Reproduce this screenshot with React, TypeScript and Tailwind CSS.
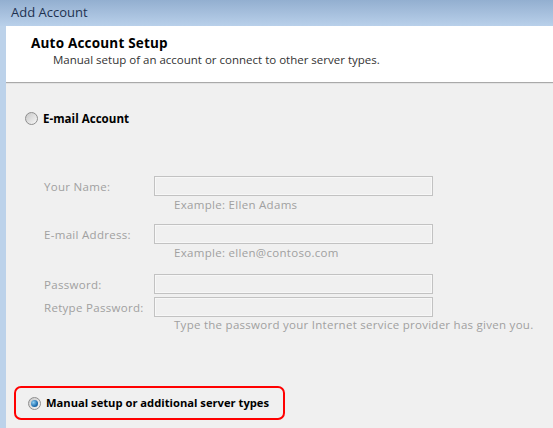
import { ReactNode } from 'react';

const font = { fontFamily: '"Open Sans", "Noto Sans", sans-serif' };

function Radio({ checked }: { checked?: boolean }) {
    return (
        <span className="relative inline-flex h-[13px] w-[13px] shrink-0 items-center justify-center rounded-full border border-[#8e8e8e] bg-gradient-to-br from-[#c9c9c9] to-[#f7f7f7]">
            {checked && (
                <span className="h-[7px] w-[7px] rounded-full bg-[radial-gradient(circle_at_35%_35%,#8fd0f4,#1f6fb0_60%,#0e4a82)]" />
            )}
        </span>
    );
}

function Field({ label, hint, top }: { label: string; hint?: ReactNode; top: string }) {
    return (
        <div className={top}>
            <div className="flex items-center">
                <span className="w-[110px] text-[11.5px] tracking-[0.3px] text-[#a0a0a0]">{label}</span>
                <div className="h-[20px] w-[279px] border border-[#c2c2c2] bg-[#f0f0f0] shadow-[inset_0_0_0_1px_#f7f7f7]" />
            </div>
            {hint && (
                <div className="mt-[1px] pl-[130px] text-[11.5px] leading-[15px] tracking-[0.3px] text-[#a0a0a0]">{hint}</div>
            )}
        </div>
    );
}

export default function App() {
    return (
        <div className="flex h-[428px] w-[553px] flex-col overflow-hidden bg-[#f0f0f0]" style={font}>
            <div className="flex h-[26px] items-center bg-gradient-to-b from-[#93afd0] to-[#b9d0ea] pl-[11px] text-[13px] text-[#1e3250]">
                Add Account
            </div>
            <div className="flex flex-1 border-l-[6px] border-[#bcd2ea]">
                <div className="flex flex-1 flex-col">
                    <div className="h-[57px] border-b border-[#a9a9a9] bg-white pl-[25px] pt-[8px] shadow-[0_1px_0_#e3e3e3]">
                        <div className="text-[13.5px] font-bold leading-[18px] tracking-[0.2px] text-black">Auto Account Setup</div>
                        <div className="pl-[22px] text-[11.5px] leading-[15px] text-[#333]">
                            Manual setup of an account or connect to other server types.
                        </div>
                    </div>

                    <div className="flex flex-1 flex-col">
                        <label className="mt-[27px] flex items-center gap-[5px] pl-[19px] text-[11.6px] font-bold text-black">
                            <Radio />
                            E-mail Account
                        </label>

                        <div className="pl-[38px]">
                            <Field top="mt-[49px]" label="Your Name:" hint="Example: Ellen Adams" />
                            <Field top="mt-[12px]" label="E-mail Address:" hint="Example: ellen@contoso.com" />
                            <Field top="mt-[14px]" label="Password:" />
                            <Field top="mt-[3px]" label="Retype Password:" />
                            <div className="pl-[130px] text-[11.5px] leading-[15px] tracking-[0.27px] text-[#a0a0a0]">
                                Type the password your Internet service provider has given you.
                            </div>
                        </div>

                        <div className="ml-[8px] mt-[54px] flex h-[34px] w-[271px] items-center gap-[5px] rounded-[7px] border-2 border-[#ff0000] pl-[12px]">
                            <Radio checked />
                            <span className="whitespace-nowrap text-[11.2px] font-bold text-black">
                                Manual setup or additional server types
                            </span>
                        </div>
                    </div>
                </div>
            </div>
        </div>
    );
}
